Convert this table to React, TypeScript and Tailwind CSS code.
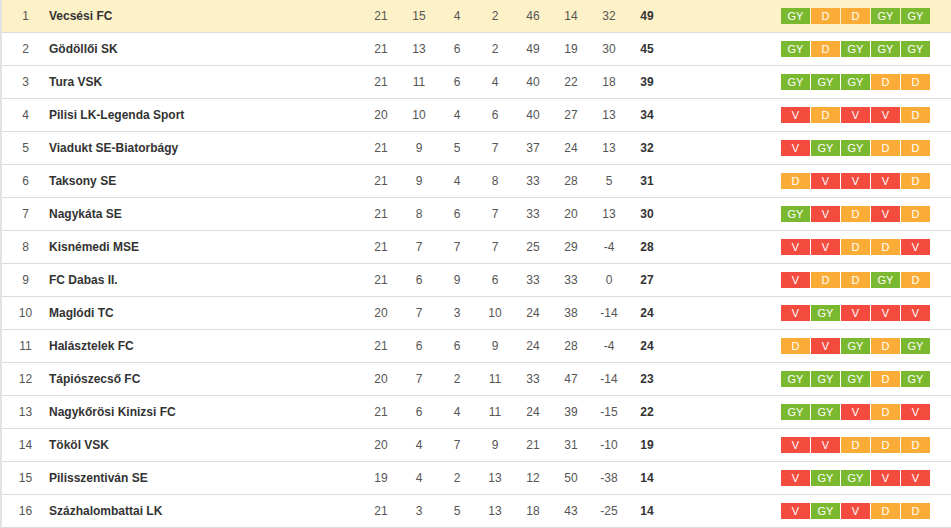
import React from 'react';

type Result = 'GY' | 'D' | 'V';

interface Team {
  pos: number;
  name: string;
  stats: number[];
  pts: number;
  form: Result[];
}

const teams: Team[] = [
  { pos: 1, name: 'Vecsési FC', stats: [21, 15, 4, 2, 46, 14, 32], pts: 49, form: ['GY', 'D', 'D', 'GY', 'GY'] },
  { pos: 2, name: 'Gödöllői SK', stats: [21, 13, 6, 2, 49, 19, 30], pts: 45, form: ['GY', 'D', 'GY', 'GY', 'GY'] },
  { pos: 3, name: 'Tura VSK', stats: [21, 11, 6, 4, 40, 22, 18], pts: 39, form: ['GY', 'GY', 'GY', 'D', 'D'] },
  { pos: 4, name: 'Pilisi LK-Legenda Sport', stats: [20, 10, 4, 6, 40, 27, 13], pts: 34, form: ['V', 'D', 'V', 'V', 'D'] },
  { pos: 5, name: 'Viadukt SE-Biatorbágy', stats: [21, 9, 5, 7, 37, 24, 13], pts: 32, form: ['V', 'GY', 'GY', 'D', 'D'] },
  { pos: 6, name: 'Taksony SE', stats: [21, 9, 4, 8, 33, 28, 5], pts: 31, form: ['D', 'V', 'V', 'V', 'D'] },
  { pos: 7, name: 'Nagykáta SE', stats: [21, 8, 6, 7, 33, 20, 13], pts: 30, form: ['GY', 'V', 'D', 'V', 'D'] },
  { pos: 8, name: 'Kisnémedi MSE', stats: [21, 7, 7, 7, 25, 29, -4], pts: 28, form: ['V', 'V', 'D', 'D', 'V'] },
  { pos: 9, name: 'FC Dabas II.', stats: [21, 6, 9, 6, 33, 33, 0], pts: 27, form: ['V', 'D', 'D', 'GY', 'D'] },
  { pos: 10, name: 'Maglódi TC', stats: [20, 7, 3, 10, 24, 38, -14], pts: 24, form: ['V', 'GY', 'V', 'V', 'V'] },
  { pos: 11, name: 'Halásztelek FC', stats: [21, 6, 6, 9, 24, 28, -4], pts: 24, form: ['D', 'V', 'GY', 'D', 'GY'] },
  { pos: 12, name: 'Tápiószecső FC', stats: [20, 7, 2, 11, 33, 47, -14], pts: 23, form: ['GY', 'GY', 'GY', 'D', 'GY'] },
  { pos: 13, name: 'Nagykőrösi Kinizsi FC', stats: [21, 6, 4, 11, 24, 39, -15], pts: 22, form: ['GY', 'GY', 'V', 'D', 'V'] },
  { pos: 14, name: 'Tököl VSK', stats: [20, 4, 7, 9, 21, 31, -10], pts: 19, form: ['V', 'V', 'D', 'D', 'D'] },
  { pos: 15, name: 'Pilisszentiván SE', stats: [19, 4, 2, 13, 12, 50, -38], pts: 14, form: ['V', 'GY', 'GY', 'V', 'V'] },
  { pos: 16, name: 'Százhalombattai LK', stats: [21, 3, 5, 13, 18, 43, -25], pts: 14, form: ['V', 'GY', 'V', 'D', 'D'] },
];

const badgeColor: Record<Result, string> = {
  GY: 'bg-[#7ab92f]',
  D: 'bg-[#fbac36]',
  V: 'bg-[#f44b3f]',
};

const FormBadge: React.FC<{ r: Result }> = ({ r }) => (
  <span className={`${badgeColor[r]} w-[29px] h-4 flex items-center justify-center text-[11px] leading-none text-white`}>
    {r}
  </span>
);

const Row: React.FC<{ team: Team }> = ({ team }) => (
  <div
    className={`flex items-center h-[33px] border-b border-[#dddddd] ${
      team.pos === 1 ? 'bg-[#fdf1c8]' : 'bg-white'
    }`}
  >
    <div className="w-[47px] text-center text-[12px] text-[#555]">{team.pos}</div>
    <div className="flex-1 text-[12px] font-bold text-[#333]">{team.name}</div>
    {team.stats.map((s, i) => (
      <div key={i} className="w-[38px] text-center text-[12px] text-[#555]">
        {s}
      </div>
    ))}
    <div className="w-[38px] text-center text-[12px] font-bold text-[#333]">{team.pts}</div>
    <div className="w-[115px]" />
    <div className="flex gap-px w-[170px]">
      {team.form.map((r, i) => (
        <FormBadge key={i} r={r} />
      ))}
    </div>
  </div>
);

export default function App() {
  return (
    <div
      className="w-[951px] h-[528px] overflow-hidden bg-white border-l-2 border-[#e2e2e2]"
      style={{ fontFamily: '"Liberation Sans", Arial, sans-serif' }}
    >
      {teams.map((t) => (
        <Row key={t.pos} team={t} />
      ))}
    </div>
  );
}
